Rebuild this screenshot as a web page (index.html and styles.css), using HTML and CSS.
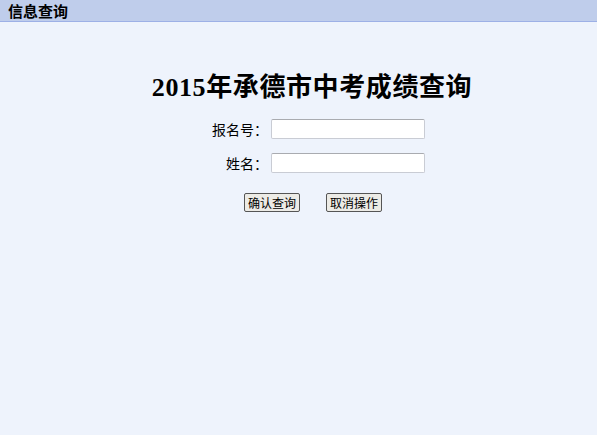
FILE: index.html
```html
<!DOCTYPE html>
<html>
<head>
<meta charset="utf-8">
<link rel="stylesheet" href="styles.css">
</head>
<body>
<div class="header">信息查询</div>
<div class="main">
  <h1 class="title">2015年承德市中考成绩查询</h1>
  <div class="form">
    <label class="label">报名号：</label>
    <input class="field" type="text">
    <label class="label">姓名：</label>
    <input class="field" type="text">
  </div>
  <div class="buttons">
    <button class="btn">确认查询</button>
    <button class="btn">取消操作</button>
  </div>
</div>
</body>
</html>
```
FILE: styles.css
```css
html, body {
  margin: 0;
  padding: 0;
  background: #eef3fc;
  height: 100%;
}
body {
  font-family: "Noto Sans CJK SC", sans-serif;
  color: #000;
}
.header {
  height: 21px;
  line-height: 21px;
  background: #bfcdeb;
  border-bottom: 1px solid #9db0e6;
  font-size: 15px;
  font-weight: bold;
  padding-left: 8px;
  box-sizing: content-box;
}
.main {
  padding-left: 27px;
  display: flex;
  flex-direction: column;
  align-items: center;
}
.title {
  margin: 49px 0 0 0;
  font-family: "Liberation Serif", "Noto Sans CJK SC", serif;
  font-size: 26px;
  letter-spacing: 0.6px;
  font-weight: bold;
  line-height: 34px;
  height: 34px;
}
.form {
  margin-top: 14px;
  display: grid;
  grid-template-columns: 69px 154px;
  column-gap: 3px;
  row-gap: 14px;
  align-items: center;
}
.label {
  text-align: right;
  font-size: 14px;
  line-height: 20px;
}
.field {
  box-sizing: border-box;
  width: 154px;
  height: 20px;
  margin: 0;
  border: 1px solid #c9ccd4;
  border-top-color: #a9abb0;
  background: #fff;
  border-radius: 2px;
}
.buttons {
  margin-top: 20px;
  margin-left: 2px;
  display: flex;
  gap: 26px;
}
.btn {
  box-sizing: border-box;
  width: 56px;
  height: 19px;
  padding: 0;
  margin: 0;
  font-family: "Noto Sans CJK SC", sans-serif;
  font-size: 12px;
  line-height: 17px;
  background: #ecebe6;
  border: 1px solid #555;
  border-radius: 2px;
  color: #000;
}
```
